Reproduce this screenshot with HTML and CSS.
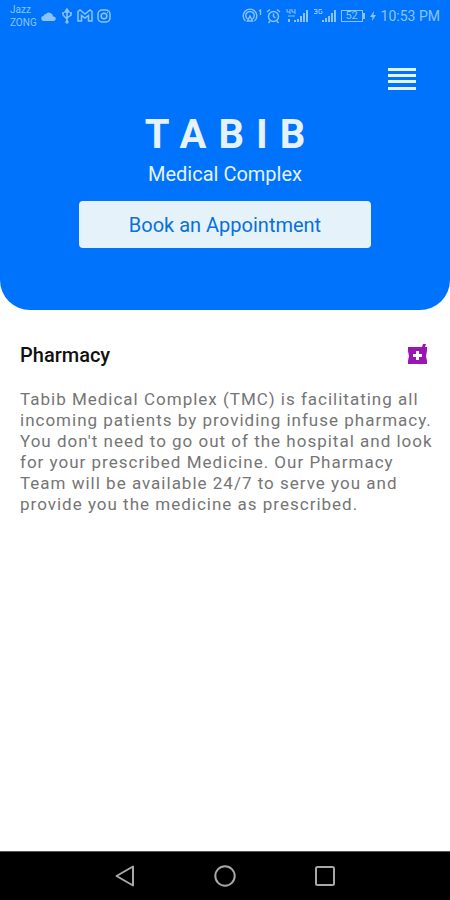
FILE: index.html
```html
<!DOCTYPE html>
<html lang="en">
<head>
<meta charset="utf-8">
<meta name="viewport" content="width=device-width, initial-scale=1">
<title>Tabib Medical Complex</title>
<link rel="stylesheet" href="styles.css">
</head>
<body>
<header class="hero">
  <div class="status">
    <div class="status-group">
      <div class="carriers"><span>Jazz</span><span>ZONG</span></div>
      <svg width="16" height="12" viewBox="0 0 16 12" fill="currentColor"><path d="M3 11a2.500 2.500 0 0 1-.5-5A2.500 2.500 0 0 1 5 4a4 4 0 0 1 7 2.500A2.300 2.300 0 0 1 13 11Z"/></svg>
      <svg width="12" height="16" viewBox="0 0 12 16" fill="none" stroke="currentColor" stroke-width="1.500"><path d="M6 2v12M2 5v2l4 4M10 5v2l-4 3M4 4l2-3 2 3Z"/><circle cx="6" cy="14" r="1"/><path d="M1 5h2M9 5h2"/></svg>
      <svg width="16" height="14" viewBox="0 0 16 14" fill="none" stroke="currentColor" stroke-width="1.500"><path d="M1 12V2.500L3 1l5 4 5-4 2 1.500V12h-3.500V6.500L8 9 4.500 6.500V12Z"/></svg>
      <svg width="14" height="14" viewBox="0 0 14 14" fill="none" stroke="currentColor" stroke-width="1.500"><rect x="1" y="1" width="12" height="12" rx="4"/><circle cx="7" cy="7" r="2.800"/><path d="M10 3.500h1"/></svg>
    </div>
    <div class="status-group">
      <svg width="20" height="16" viewBox="0 0 20 16" fill="none" stroke="currentColor" stroke-width="1.400"><path d="M3.500 13A6.800 6.800 0 1 1 12.500 13M5.500 11a4.200 4.200 0 1 1 5 0M8 8l-2.500 5h5Z"/><path d="M17 3l1.500-1v5"/></svg>
      <svg width="15" height="16" viewBox="0 0 15 16" fill="none" stroke="currentColor" stroke-width="1.400"><circle cx="7.500" cy="8.500" r="5"/><path d="M7.500 5.500v3l2 1.500M1 4l3-2.500M14 4l-3-2.500M4 13l-1.500 2M11 13l1.500 2"/></svg>
      <svg width="24" height="16" viewBox="0 0 24 16" fill="currentColor"><path d="M9 12h2v2H9zM12 11h2v3h-2zM15 8h2v6h-2zM18 5h2v9h-2zM21 2h2v12h-2zM3 11h2v3H3z"/><path d="M2 1v3h3M5 1v5M7 1v3h3M10 1v5M3 8h7" fill="none" stroke="currentColor"/></svg>
      <svg width="24" height="16" viewBox="0 0 24 16" fill="currentColor"><path d="M9 12h2v2H9zM12 10h2v4h-2zM15 8h2v6h-2zM18 5h2v9h-2zM21 2h2v12h-2z"/><path d="M1 1.500h3v4H1M2 3.500h2M9 1.500H6v4h3v-2H8" fill="none" stroke="currentColor"/></svg>
      <div class="battery"><span class="battery-level">52</span><span class="battery-cap"></span></div>
      <svg width="8" height="12" viewBox="0 0 8 12" fill="currentColor"><path d="M5 1 1 7h2.500L3 11l4-6H4.500Z"/></svg>
      <time class="clock">10:53 PM</time>
    </div>
  </div>
  <div class="toolbar">
    <button class="menu" type="button" aria-label="Menu">
      <svg width="28" height="24" viewBox="0 0 28 24" fill="currentColor"><path d="M0 1h28v3H0zM0 7h28v3H0zM0 13h28v3H0zM0 20h28v3H0z"/></svg>
    </button>
  </div>
  <h1 class="brand">TABIB</h1>
  <p class="tagline">Medical Complex</p>
  <button class="book" type="button">Book an Appointment</button>
</header>
<main class="content">
  <div class="section-head">
    <h2 class="section-title">Pharmacy</h2>
    <svg width="20" height="22" viewBox="0 0 20 22"><path fill="#9b16b0" fill-rule="evenodd" d="M0 3h14l1-3h3l-1 3h2v4l-1 5 1 5v3H0v-3l1-5-1-5ZM8 7v3H5v3h3v3h3v-3h3v-3h-3V7Z"/></svg>
  </div>
  <p class="description">Tabib Medical Complex (TMC) is facilitating all incoming patients by providing infuse pharmacy. You don't need to go out of the hospital and look for your prescribed Medicine. Our Pharmacy Team will be available 24/7 to serve you and provide you the medicine as prescribed.</p>
</main>
<nav class="system-nav">
  <button type="button" aria-label="Back"><svg width="24" height="24" viewBox="0 0 24 24"><path d="M20 2.500v19L3.500 12Z"/></svg></button>
  <button type="button" aria-label="Home"><svg width="24" height="24" viewBox="0 0 24 24"><circle cx="12" cy="12" r="9.700"/></svg></button>
  <button type="button" aria-label="Recent apps"><svg width="24" height="24" viewBox="0 0 24 24"><rect x="3" y="3" width="18" height="18" rx="1.500"/></svg></button>
</nav>
</body>
</html>
```
FILE: styles.css
```css
* {
  box-sizing: border-box;
}

body {
  margin: 0;
  min-height: 100vh;
  display: flex;
  flex-direction: column;
  background: #fff;
  font-family: Roboto, "Liberation Sans", sans-serif;
}

h1, h2, p {
  margin: 0;
}

button {
  border: 0;
  padding: 0;
  font: inherit;
  cursor: pointer;
}

svg {
  display: block;
  flex: none;
}

.hero {
  display: flex;
  flex-direction: column;
  align-items: center;
  padding-bottom: 62px;
  border-radius: 0 0 30px 30px;
  background: #0073fd;
  color: #e5f2fc;
}

.status {
  align-self: stretch;
  display: flex;
  justify-content: space-between;
  height: 32px;
  padding: 0 10px;
  color: #8cc3ff;
}

.status-group {
  display: flex;
  align-items: center;
  gap: 4px;
}

.carriers {
  display: flex;
  flex-direction: column;
  font-size: 10px;
  line-height: 13px;
}

.battery {
  display: flex;
  align-items: center;
}

.battery-level {
  width: 22px;
  border: 1px solid currentColor;
  font-size: 11px;
  line-height: 10px;
  text-align: center;
}

.battery-cap {
  width: 2px;
  height: 6px;
  background: currentColor;
}

.clock {
  font-size: 14px;
  line-height: 20px;
  white-space: nowrap;
}

.toolbar {
  align-self: stretch;
  display: flex;
  justify-content: flex-end;
  padding: 35px 34px 0;
}

.menu {
  background: none;
  color: inherit;
}

.brand {
  padding: 20px 0 0 12px;
  font-size: 40px;
  font-weight: 700;
  line-height: 48px;
  letter-spacing: 12px;
}

.tagline {
  padding: 3px 0 15px;
  font-size: 20px;
  line-height: 24px;
}

.book {
  width: 65%;
  height: 47px;
  border-radius: 4px;
  background: #e5f2fa;
  color: #0870dc;
  font-size: 20px;
}

.content {
  flex: 1;
  padding: 33px 16px 32px 20px;
}

.section-head {
  display: flex;
  align-items: center;
  justify-content: space-between;
  padding-right: 6px;
}

.section-title {
  color: #111;
  font-size: 20px;
  font-weight: 500;
  line-height: 24px;
}

.description {
  margin-top: 22px;
  color: #757575;
  font-size: 17px;
  line-height: 21px;
  letter-spacing: 1px;
}

.system-nav {
  display: flex;
  justify-content: center;
  gap: 76px;
  padding: 12px 0;
  border-top: 1px solid #555;
  background: #000;
}

.system-nav button {
  background: none;
}

.system-nav svg {
  fill: none;
  stroke: #a8a8a8;
  stroke-width: 2;
  stroke-linejoin: round;
}
```
